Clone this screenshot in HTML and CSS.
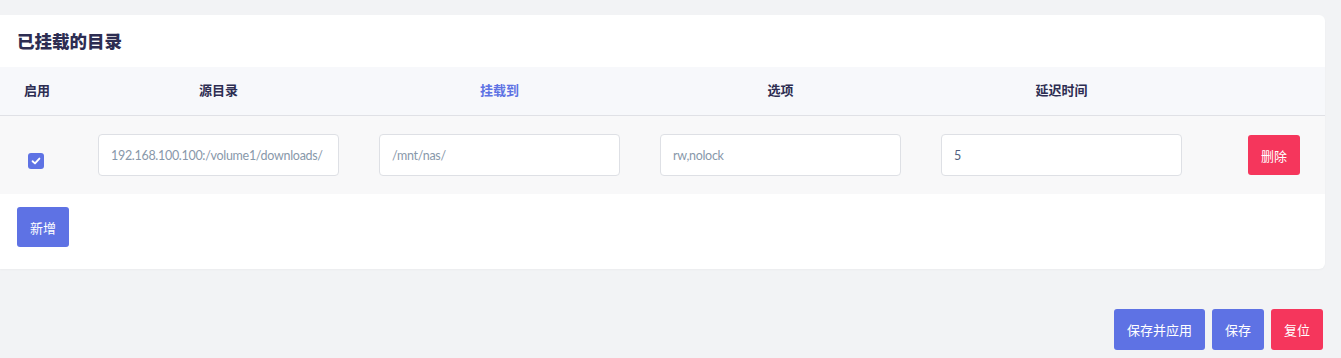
FILE: index.html
```html
<!DOCTYPE html>
<html lang="zh-CN">
<head>
  <meta charset="UTF-8" />
  <meta name="viewport" content="width=device-width, initial-scale=1.0"/>
  <title>挂载点</title>
  <link rel="stylesheet" href="styles.css">
</head>
<body>
  <div class="page">
    <div class="card">
      <h3 class="card-title">已挂载的目录</h3>

      <div class="table">
        <div class="row head">
          <div class="cell col-enable">启用</div>
          <div class="cell">源目录</div>
          <div class="cell active">挂载到</div>
          <div class="cell">选项</div>
          <div class="cell">延迟时间</div>
          <div class="cell col-action"></div>
        </div>

        <div class="row body">
          <div class="cell col-enable">
            <span class="check">
              <svg width="10" height="10" viewBox="0 0 10 10"><path d="M1.6 5.2 L4 7.4 L8.4 2.6" fill="none" stroke="#fff" stroke-width="1.9" stroke-linecap="round" stroke-linejoin="round"/></svg>
            </span>
          </div>
          <div class="cell"><input class="field" type="text" value="192.168.100.100:/volume1/downloads/"></div>
          <div class="cell"><input class="field" type="text" value="/mnt/nas/"></div>
          <div class="cell"><input class="field" type="text" value="rw,nolock"></div>
          <div class="cell"><input class="field dark" type="text" value="5"></div>
          <div class="cell col-action"><button class="btn btn-red">删除</button></div>
        </div>
      </div>

      <div class="card-foot">
        <button class="btn btn-blue">新增</button>
      </div>
    </div>

    <div class="actions">
      <button class="btn btn-blue">保存并应用</button>
      <button class="btn btn-blue">保存</button>
      <button class="btn btn-red">复位</button>
    </div>
  </div>
</body>
</html>
```

FILE: styles.css
```css
* {
  margin: 0;
  padding: 0;
  box-sizing: border-box;
  font-family: Inter, "Noto Sans CJK SC", sans-serif;
}

body, html {
  height: 100%;
  background: #f2f3f5;
}

.page {
  padding: 15px 16px 0 0;
}

.card {
  background: #fff;
  border-radius: 0 6px 6px 0;
  box-shadow: 0 1px 2px rgba(0, 0, 0, 0.03);
}

.card-title {
  height: 52px;
  padding: 13px 17px 0;
  font-size: 17.5px;
  font-weight: 800;
  color: #2d2d52;
}

.row {
  display: grid;
  grid-template-columns: 78px 281px 281px 281px 281px 1fr;
  align-items: center;
}

.row.head {
  height: 49px;
  background: #f7f8fb;
  border-bottom: 1px solid #e0e1e6;
}

.row.body {
  height: 78px;
  background: #f8f8f9;
}

.cell {
  display: flex;
  justify-content: center;
  padding: 0 20px;
  font-size: 13px;
  font-weight: bold;
  color: #2d2d52;
}

.head .cell {
  padding-bottom: 4px;
}

.cell.active {
  color: #5e72e4;
}

.cell.col-enable {
  padding: 0;
}

.head .cell.col-enable {
  padding: 0 4px 4px 0;
}

.cell.col-action {
  justify-content: flex-end;
  padding: 0 25px 0 0;
}

.check {
  width: 16px;
  height: 16px;
  margin: 11px 6px 0 0;
  border-radius: 3px;
  background: #5e72e4;
  display: flex;
  align-items: center;
  justify-content: center;
}

.field {
  width: 241px;
  height: 42px;
  padding: 0 12px;
  font-family: Lato, "Noto Sans CJK SC", sans-serif;
  font-size: 12.5px;
  letter-spacing: -0.3px;
  color: #8898aa;
  border: 1px solid #dee0e5;
  border-radius: 4px;
  background: #fff;
  outline: none;
}

.field.dark {
  color: #525f7f;
}

.card-foot {
  padding: 13px 17px 22px;
}

.btn {
  height: 40px;
  padding: 0 13px;
  border: none;
  border-radius: 3px;
  color: #fff;
  font-size: 13px;
  cursor: pointer;
}

.btn-blue {
  background: #5e72e4;
}

.btn-red {
  background: #f5365c;
}

.actions {
  display: flex;
  justify-content: flex-end;
  gap: 7px;
  margin-top: 40px;
  padding-right: 2px;
}

.actions .btn {
  height: 41px;
}
```
